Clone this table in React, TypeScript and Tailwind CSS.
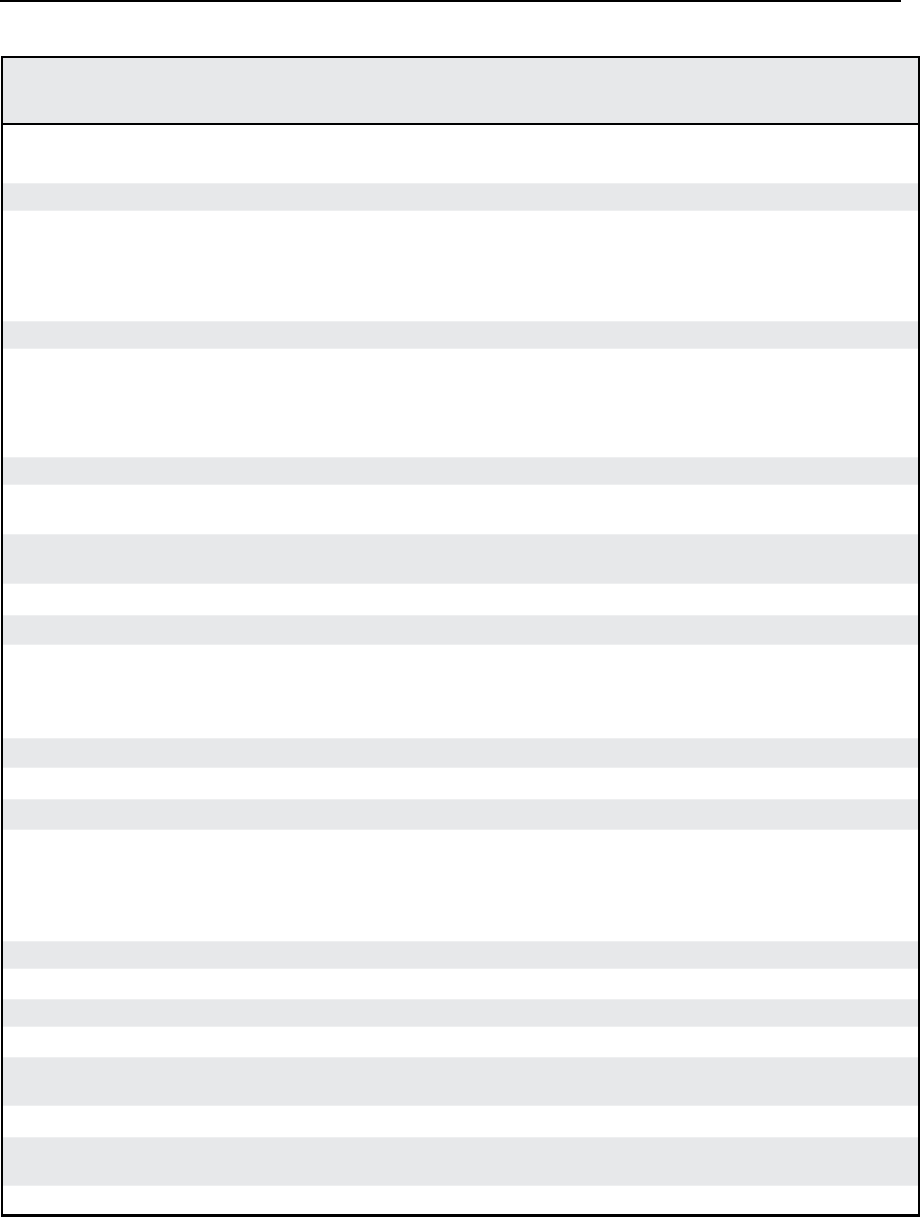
const ROWS: { h: string; shaded: boolean }[] = [
  { h: "h-[58px]", shaded: false },
  { h: "h-[28px]", shaded: true },
  { h: "h-[110px]", shaded: false },
  { h: "h-[28px]", shaded: true },
  { h: "h-[108px]", shaded: false },
  { h: "h-[28px]", shaded: true },
  { h: "h-[49px]", shaded: false },
  { h: "h-[50px]", shaded: true },
  { h: "h-[31px]", shaded: false },
  { h: "h-[30px]", shaded: true },
  { h: "h-[93px]", shaded: false },
  { h: "h-[30px]", shaded: true },
  { h: "h-[31px]", shaded: false },
  { h: "h-[31px]", shaded: true },
  { h: "h-[111px]", shaded: false },
  { h: "h-[28px]", shaded: true },
  { h: "h-[30px]", shaded: false },
  { h: "h-[28px]", shaded: true },
  { h: "h-[30px]", shaded: false },
  { h: "h-[49px]", shaded: true },
  { h: "h-[31px]", shaded: false },
  { h: "h-[49px]", shaded: true },
  { h: "h-[28px]", shaded: false },
];

export default function App() {
  return (
    <div className="min-h-[1217px] w-[921px] bg-white font-['Liberation_Sans',sans-serif]">
      <div className="h-[2px] w-[901px] bg-black" />
      <div className="ml-px mt-[54px] flex w-[919px] flex-col border-x-2 border-t-2 border-b-[3px] border-black">
        <div className="h-[67px] border-b-2 border-black bg-[#e7e8ea]" />
        {ROWS.map((r, i) => (
          <div
            key={i}
            className={
              r.shaded
                ? `${r.h} border-y border-[#eeeff0] bg-[#e7e8ea]`
                : `${r.h} bg-white`
            }
          />
        ))}
      </div>
    </div>
  );
}
